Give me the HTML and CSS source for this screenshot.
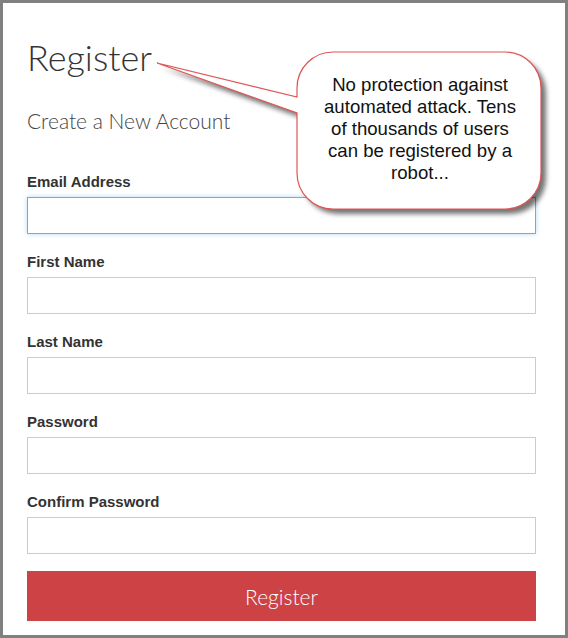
FILE: index.html
```html
<!DOCTYPE html>
<html>
<head>
<meta charset="utf-8">
<link rel="stylesheet" href="styles.css">
</head>
<body>
<div class="frame">
  <h1 class="title">Register</h1>
  <h2 class="subtitle">Create a New Account</h2>
  <form class="form">
    <div class="field">
      <label class="label">Email Address</label>
      <div class="input focus"></div>
    </div>
    <div class="field">
      <label class="label">First Name</label>
      <div class="input"></div>
    </div>
    <div class="field">
      <label class="label">Last Name</label>
      <div class="input"></div>
    </div>
    <div class="field">
      <label class="label">Password</label>
      <div class="input"></div>
    </div>
    <div class="field">
      <label class="label">Confirm Password</label>
      <div class="input"></div>
    </div>
    <div class="button">Register</div>
  </form>

  <svg class="callout-svg" width="568" height="638" viewBox="0 0 568 638">
    <defs>
      <filter id="blur" x="-20%" y="-20%" width="140%" height="140%">
        <feGaussianBlur stdDeviation="2.5"/>
      </filter>
    </defs>
    <path class="shadow" transform="translate(5,5)" filter="url(#blur)"
      d="M333 52 H505 A36 36 0 0 1 541 88 V173 A36 36 0 0 1 505 209 H333 A36 36 0 0 1 297 173 V113 L157 63 L297 97 V88 A36 36 0 0 1 333 52 Z"/>
    <path class="bubble"
      d="M333 52 H505 A36 36 0 0 1 541 88 V173 A36 36 0 0 1 505 209 H333 A36 36 0 0 1 297 173 V113 L157 63 L297 97 V88 A36 36 0 0 1 333 52 Z"/>
  </svg>
  <div class="callout-text">No protection against automated attack. Tens of thousands of users can be registered by a robot...</div>
</div>
</body>
</html>
```
FILE: styles.css
```css
html, body {
  margin: 0;
  padding: 0;
  background: #fff;
}
.frame {
  position: relative;
  box-sizing: border-box;
  width: 568px;
  height: 638px;
  border: 3px solid #808080;
  padding: 30px 29px 0 24px;
  background: #fff;
  overflow: hidden;
}
.title {
  margin: 0;
  font-family: Lato, "Open Sans", sans-serif;
  font-weight: 300;
  font-size: 36px;
  line-height: 48px;
  color: #333;
}
.subtitle {
  margin: 27px 0 0 0;
  font-family: Lato, "Open Sans", sans-serif;
  font-weight: 300;
  font-size: 21px;
  line-height: 26px;
  color: #444;
}
.form {
  display: flex;
  flex-direction: column;
  margin-top: 34px;
}
.field {
  display: flex;
  flex-direction: column;
  gap: 2px;
  margin-bottom: 14px;
}
.label {
  font-family: "Liberation Sans", Arial, sans-serif;
  font-weight: bold;
  font-size: 15px;
  line-height: 27px;
  height: 27px;
  color: #333;
}
.input {
  box-sizing: border-box;
  height: 37px;
  border: 1px solid #ccc;
  background: #fff;
}
.input.focus {
  border-color: #66afe9;
  box-shadow: 0 0 5px rgba(102, 175, 233, 0.45);
}
.button {
  margin-top: 3px;
  height: 50px;
  background: #cc4245;
  color: #fff;
  display: flex;
  align-items: center;
  justify-content: center;
  font-family: Lato, "Open Sans", sans-serif;
  font-weight: 300;
  font-size: 21px;
}
.callout-svg {
  position: absolute;
  left: -3px;
  top: -3px;
  pointer-events: none;
}
.shadow {
  fill: rgba(0, 0, 0, 0.55);
}
.bubble {
  fill: #fff;
  stroke: #e05555;
  stroke-width: 1.2;
}
.callout-text {
  position: absolute;
  left: 312px;
  top: 71px;
  width: 210px;
  text-align: center;
  font-family: "Liberation Sans", Arial, sans-serif;
  font-size: 18.6px;
  line-height: 22px;
  color: #111;
}
```
